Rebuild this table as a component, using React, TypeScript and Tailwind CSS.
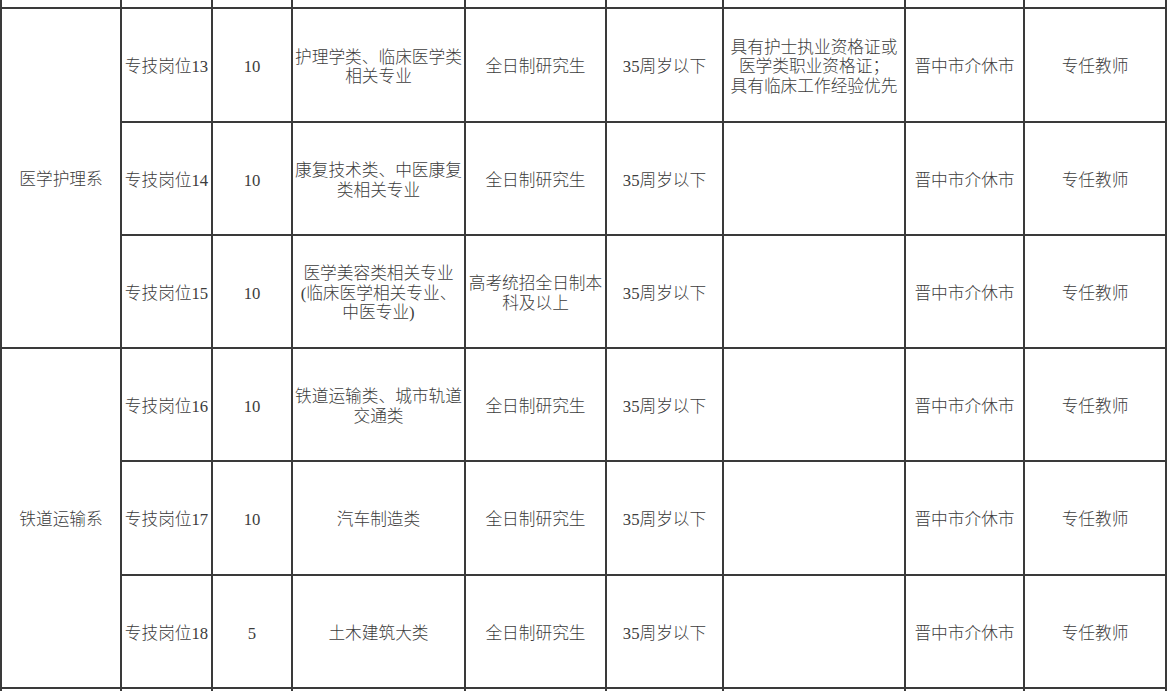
import React from 'react';

type Row = {
  post: string;
  count: string;
  major: string[];
  edu: string[];
  age: string;
  other: string[];
  place: string;
  job: string;
};

const rows: Row[] = [
  {
    post: '专技岗位13',
    count: '10',
    major: ['护理学类、临床医学类', '相关专业'],
    edu: ['全日制研究生'],
    age: '35周岁以下',
    other: ['具有护士执业资格证或', '医学类职业资格证；', '具有临床工作经验优先'],
    place: '晋中市介休市',
    job: '专任教师',
  },
  {
    post: '专技岗位14',
    count: '10',
    major: ['康复技术类、中医康复', '类相关专业'],
    edu: ['全日制研究生'],
    age: '35周岁以下',
    other: [],
    place: '晋中市介休市',
    job: '专任教师',
  },
  {
    post: '专技岗位15',
    count: '10',
    major: ['医学美容类相关专业', '(临床医学相关专业、', '中医专业)'],
    edu: ['高考统招全日制本', '科及以上'],
    age: '35周岁以下',
    other: [],
    place: '晋中市介休市',
    job: '专任教师',
  },
  {
    post: '专技岗位16',
    count: '10',
    major: ['铁道运输类、城市轨道', '交通类'],
    edu: ['全日制研究生'],
    age: '35周岁以下',
    other: [],
    place: '晋中市介休市',
    job: '专任教师',
  },
  {
    post: '专技岗位17',
    count: '10',
    major: ['汽车制造类'],
    edu: ['全日制研究生'],
    age: '35周岁以下',
    other: [],
    place: '晋中市介休市',
    job: '专任教师',
  },
  {
    post: '专技岗位18',
    count: '5',
    major: ['土木建筑大类'],
    edu: ['全日制研究生'],
    age: '35周岁以下',
    other: [],
    place: '晋中市介休市',
    job: '专任教师',
  },
];

const Cell = ({ lines, className = '' }: { lines: string[]; className?: string }) => (
  <div className={`bg-white flex flex-col items-center justify-center pt-[4px] text-center whitespace-nowrap overflow-hidden ${className}`}>
    {lines.map((l, i) => (
      <span key={i}>{l}</span>
    ))}
  </div>
);

export default function App() {
  return (
    <div className="w-[1170px] h-[691px] bg-white overflow-hidden">
      <div
        className="w-[1167px] h-[691px] bg-[#3a3a3a] pl-[2px] text-[16.7px] leading-[19.5px] font-light text-[#3c3c3c]"
        style={{ fontFamily: '"Liberation Serif", "Noto Sans CJK SC", serif' }}
      >
        <div className="grid grid-cols-[118px_89px_78px_171px_139px_115px_180px_117px_140px] grid-rows-[7px_112px_111px_111px_111px_112px_111px_2px] gap-[2px] h-full">
          {/* partial row above */}
          {Array.from({ length: 9 }).map((_, i) => (
            <div key={`top-${i}`} className="bg-white" />
          ))}

          <Cell lines={['医学护理系']} className="row-span-3 col-start-1 row-start-2" />
          <Cell lines={['铁道运输系']} className="row-span-3 col-start-1 row-start-5" />

          {rows.map((r) => (
            <React.Fragment key={r.post}>
              <Cell lines={[r.post]} className="col-start-2" />
              <Cell lines={[r.count]} />
              <Cell lines={r.major} />
              <Cell lines={r.edu} />
              <Cell lines={[r.age]} />
              <Cell lines={r.other} />
              <Cell lines={[r.place]} />
              <Cell lines={[r.job]} />
            </React.Fragment>
          ))}

          {/* partial row below */}
          {Array.from({ length: 9 }).map((_, i) => (
            <div key={`bot-${i}`} className="bg-white" />
          ))}
        </div>
      </div>
    </div>
  );
}
